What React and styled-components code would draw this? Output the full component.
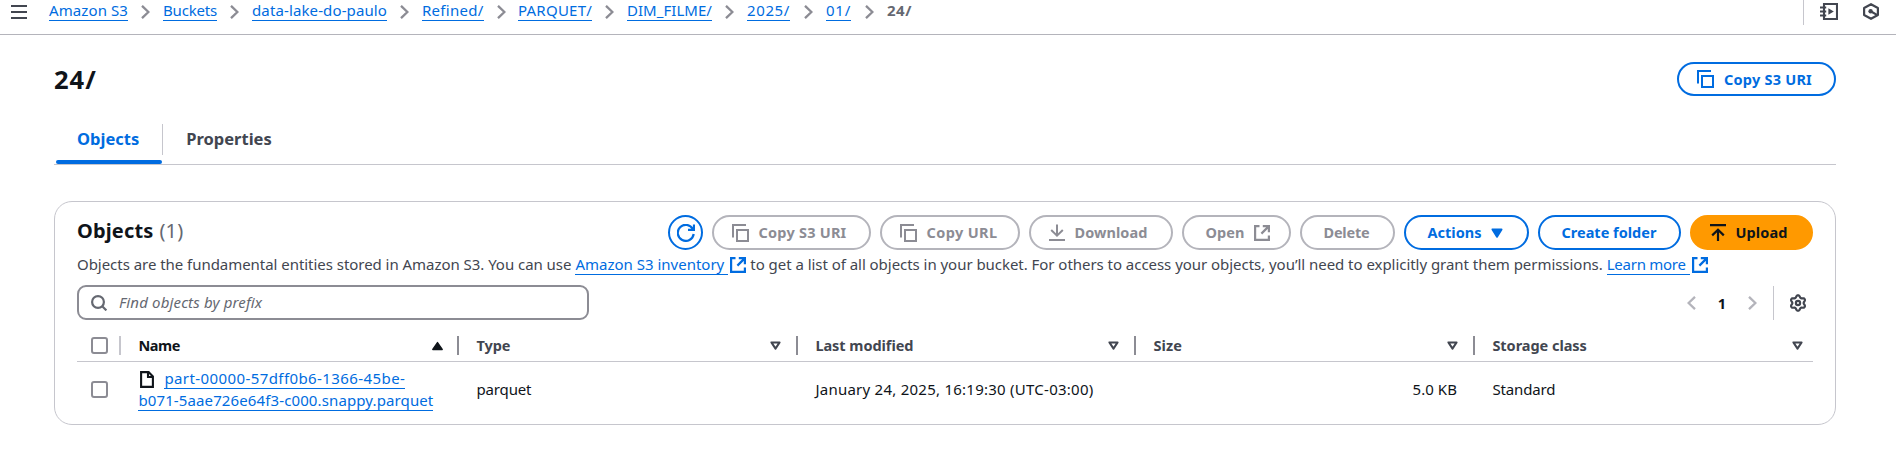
import React from "react";
import styled, { createGlobalStyle, css } from "styled-components";

const color = {
  blue: "#006ce0",
  ink: "#0f141a",
  body: "#424650",
  muted: "#656871",
  grey: "#8c8c94",
  disabled: "#b4b4bb",
  line: "#c6c6cd",
  orange: "#ff9900",
};

const GlobalStyle = createGlobalStyle`
  * { box-sizing: border-box; }
  body {
    margin: 0;
    background: #fff;
    color: ${color.ink};
    font-family: "Noto Sans", "Open Sans", sans-serif;
    font-size: 15px;
    line-height: 22px;
    overflow: hidden;
  }
`;

/* ---------- icons ---------- */

const Svg = styled.svg`
  display: block;
  flex: none;
  width: ${(p) => p.$w || 17}px;
  height: ${(p) => p.$h || p.$w || 17}px;
  fill: none;
  stroke: currentColor;
  stroke-width: ${(p) => p.$stroke || 2};
`;

const MenuIcon = () => (
  <Svg viewBox="0 0 16 15" $w={16} $h={15} $stroke={2}>
    <path d="M0 2h16M0 8h16M0 14h16" />
  </Svg>
);
const ChevronIcon = ({ left }) => (
  <Svg viewBox="0 0 9 14" $w={9} $h={14} $stroke={2.3}>
    <path d={left ? "M8 .8 1.6 7 8 13.2" : "M1 .8 7.4 7 1 13.2"} />
  </Svg>
);
const CopyIcon = () => (
  <Svg viewBox="0 0 17 18" $w={17} $h={18} $stroke={2}>
    <path d="M14 1H1v12.5" />
    <path d="M5 6h11v11H5z" />
  </Svg>
);
const RefreshIcon = () => (
  <Svg viewBox="0 0 18 18" $w={18} $stroke={2.2}>
    <path d="M16.7 10A8 8 0 1 1 15.9 5.2" />
    <path d="M17 .4v5.4h-6" />
  </Svg>
);
const DownloadIcon = () => (
  <Svg viewBox="0 0 16 17" $w={16} $h={17}>
    <path d="M0 16h16M8 .5v11M2.2 6 8 11.6 13.8 6" />
  </Svg>
);
const UploadIcon = () => (
  <Svg viewBox="0 0 16 17" $w={16} $h={17} $stroke={2.2}>
    <path d="M0 1.2h16M8 17V6M2.2 11.4 8 5.8l5.8 5.6" />
  </Svg>
);
const ExternalIcon = () => (
  <Svg viewBox="0 0 16 16" $w={16} $stroke={2.2}>
    <path d="M5.5 1.1H1.1v13.8h13.8v-4.4M8.8 1.1h6.1v6.1M14.9 1.1 7.4 8.6" />
  </Svg>
);
const SearchIcon = () => (
  <Svg viewBox="0 0 16 16" $w={16} $stroke={2.2}>
    <circle cx="7" cy="7" r="5.9" />
    <path d="m11.2 11.2 4.2 4.2" />
  </Svg>
);
const FileIcon = () => (
  <Svg viewBox="0 0 14 17" $w={14} $h={17} $stroke={2.1}>
    <path d="M1.1 1.1h7.5L12.9 5.4v10.5H1.1z" />
    <path d="M8 1v5h5" />
  </Svg>
);
const gearPath =
  Array.from({ length: 72 }, (_, i) => {
    const a = (i / 72) * Math.PI * 2;
    const wave = Math.cos(6 * a);
    const r = 6.7 + 1.05 * Math.sign(wave) * Math.pow(Math.abs(wave), 0.8);
    return `${i ? "L" : "M"}${(9 + r * Math.sin(a)).toFixed(2)} ${(9 - r * Math.cos(a)).toFixed(2)}`;
  }).join("") + "Z";
const GearIcon = () => (
  <Svg viewBox="0 0 18 18" $w={18} $stroke={2.2}>
    <path d={gearPath} strokeLinejoin="round" />
    <circle cx="9" cy="9" r="2.1" />
  </Svg>
);
const NotebookIcon = () => (
  <Svg viewBox="0 0 18 17" $w={18} $h={17} $stroke={2.1}>
    <path d="M4 1h13v15H4z" />
    <path d="M0 4.4h6.2M0 8.5h6.2M0 12.6h6.2" strokeWidth="2" />
    <path d="M8.4 5.2v6.6l5.4-3.3z" fill="currentColor" stroke="none" />
  </Svg>
);
const HexagonIcon = () => (
  <Svg viewBox="0 0 16 17" $w={16} $h={17} $stroke={2.2}>
    <path d="M8 1.2 14.9 5v7L8 15.8 1.1 12V5z" strokeLinejoin="round" />
    <circle cx="7.6" cy="8.2" r="2.2" fill="currentColor" stroke="none" />
    <path d="m7.6 8.2 6.4 3.7" />
  </Svg>
);
const CaretIcon = () => (
  <Svg viewBox="0 0 12 10" $w={12} $h={10}>
    <path d="M1.5 1.4h9L6 8.6z" fill="currentColor" strokeLinejoin="round" />
  </Svg>
);
const SortIcon = ({ active }) => (
  <Svg viewBox="0 0 11 10" $w={11} $h={10}>
    {active ? (
      <path d="M.8 8.5h9.4L5.5 1.6z" fill="currentColor" strokeLinejoin="round" strokeWidth="1.4" />
    ) : (
      <path d="M1.4 1.4h8.2L5.5 7.6z" strokeLinejoin="round" />
    )}
  </Svg>
);

/* ---------- top bar ---------- */

const Label = styled.span`
  letter-spacing: ${(p) => p.$track || 0}px;
  white-space: nowrap;
`;

const TopBar = styled.header`
  display: flex;
  align-items: flex-start;
  height: 35px;
  padding: 0 17px 0 11px;
  border-bottom: 1px solid ${color.disabled};
  color: ${color.body};
`;
const MenuButton = styled.div`
  padding-top: 4px;
  margin-right: 22px;
`;
const Crumbs = styled.nav`
  display: flex;
  flex: 1;
`;
const Crumb = styled.div`
  display: flex;
  width: ${(p) => p.$w}px;
  color: ${(p) => (p.$current ? color.muted : color.blue)};
  font-weight: ${(p) => (p.$current ? 700 : 400)};
  line-height: 20px;
`;
const CrumbLink = styled.a`
  height: 21px;
  white-space: nowrap;
  border-bottom: 1px solid ${color.blue};
  letter-spacing: ${(p) => p.$track}px;
`;
const CrumbSeparator = styled.span`
  padding: 5px 0 0 13px;
  margin-left: auto;
  margin-right: 13px;
  color: ${color.grey};
`;
const TopTools = styled.div`
  display: flex;
  gap: 25px;
  height: 25px;
  padding: 3px 0 0 16px;
  border-left: 1px solid ${color.line};
`;

/* ---------- page ---------- */

const Page = styled.main`
  padding: 27px 60px 0 54px;
`;
const TitleRow = styled.div`
  display: flex;
  align-items: center;
  justify-content: space-between;
  height: 34px;
`;
const Title = styled.h1`
  margin: 0;
  font-size: 25.5px;
  font-weight: 700;
  letter-spacing: 1px;
`;
const Tabs = styled.div`
  display: flex;
  align-items: center;
  height: 50px;
  margin-top: 19px;
  border-bottom: 1px solid ${color.line};
`;
const Tab = styled.div`
  position: relative;
  display: flex;
  align-items: center;
  height: 49px;
  padding: 0 23px 2px;
  font-size: 16.5px;
  font-weight: 700;
  color: ${(p) => (p.$active ? color.blue : color.body)};
  ${(p) =>
    p.$active &&
    css`
      &::after {
        content: "";
        position: absolute;
        left: 2px;
        right: 0;
        bottom: 0;
        height: 4px;
        border-radius: 2px;
        background: ${color.blue};
      }
    `}
`;
const TabDivider = styled.div`
  width: 1px;
  height: 31px;
  background: ${color.line};
`;

const Button = styled.button`
  display: flex;
  align-items: center;
  gap: 10px;
  width: ${(p) => p.$w}px;
  height: ${(p) => p.$h || 35}px;
  padding: 0 0 0 ${(p) => (p.$leadIcon ? 18 : 22)}px;
  border: 2px solid ${color.blue};
  border-radius: 18px;
  background: #fff;
  color: ${color.blue};
  font: 700 14.5px/20px "Noto Sans", "Open Sans", sans-serif;
  ${(p) =>
    p.$off &&
    css`
      border-color: ${color.disabled};
      color: ${color.grey};
    `}
  ${(p) =>
    p.$primary &&
    css`
      border-color: ${color.orange};
      background: ${color.orange};
      color: ${color.ink};
    `}
`;
const RoundButton = styled(Button)`
  justify-content: center;
  padding: 0;
`;

/* ---------- objects panel ---------- */

const Panel = styled.section`
  height: 224px;
  margin-top: 36px;
  padding: 13px 22px 0;
  border: 1px solid ${color.line};
  border-radius: 18px;
`;
const PanelHeader = styled.div`
  display: flex;
  align-items: center;
  justify-content: space-between;
  height: 35px;
  ${Button} > ${Label} {
    padding-bottom: 2px;
    margin-left: -0.5px;
  }
`;
const PanelTitle = styled.h2`
  display: flex;
  gap: 6px;
  margin: 0;
  padding-bottom: 3px;
  font-size: 20px;
  font-weight: 700;
  letter-spacing: 0.15px;
`;
const Counter = styled.span`
  color: ${color.muted};
  font-weight: 400;
`;
const ButtonGroup = styled.div`
  display: flex;
  gap: 9px;
`;
const Description = styled.p`
  display: flex;
  margin: 3px 0 0;
  height: 22px;
  color: ${color.body};
  white-space: nowrap;
`;
const InfoLink = styled.a`
  display: flex;
  align-items: flex-start;
  margin: 0 4px 0 4px;
  color: ${color.blue};
  svg {
    margin: 4px 0 0 2px;
  }
`;
const InfoLinkText = styled.span`
  height: 22px;
  padding-right: 4px;
  border-bottom: 1px solid ${color.blue};
  letter-spacing: ${(p) => p.$track || 0}px;
`;
const FilterRow = styled.div`
  display: flex;
  justify-content: space-between;
  align-items: center;
  height: 35px;
  margin-top: 10px;
`;
const SearchBox = styled.div`
  display: flex;
  align-items: center;
  gap: 12px;
  width: 512px;
  height: 35px;
  padding-left: 12px;
  border: 2px solid ${color.grey};
  border-radius: 9px;
  color: ${color.muted};
`;
const Placeholder = styled.span`
  padding-bottom: 2px;
  font-size: 15px;
  font-style: italic;
  letter-spacing: 0.15px;
`;
const Pagination = styled.div`
  display: flex;
  align-items: center;
  color: ${color.disabled};
`;
const PageNumber = styled.span`
  width: 52px;
  text-align: center;
  font-size: 14.5px;
  font-weight: 700;
  color: ${color.ink};
`;
const Preferences = styled.div`
  display: flex;
  align-items: center;
  height: 34px;
  margin-left: 16px;
  padding: 0 6px 0 15px;
  border-left: 1px solid ${color.line};
  color: ${color.body};
`;

const Table = styled.div`
  margin-top: 10px;
`;
const Row = styled.div`
  display: grid;
  grid-template-columns: 44px 338px 339px 338px 339px 338px;
  align-items: center;
  height: 54px;
`;
const HeadRow = styled(Row)`
  height: 32px;
  border-bottom: 1px solid ${color.line};
`;
const HeadCell = styled.div`
  display: flex;
  align-items: center;
  justify-content: space-between;
  height: 19px;
  padding: 0 ${(p) => (p.$last ? 10 : p.$sorted ? 14 : 15)}px 0 17.4px;
  border-right: ${(p) => (p.$last ? "none" : `2px solid ${color.grey}`)};
  color: ${(p) => (p.$sorted ? color.ink : color.body)};
  font-size: 14.5px;
  font-weight: 700;
  ${Label} {
    padding-bottom: 1px;
  }
`;
const CheckCell = styled.div`
  display: flex;
  align-items: center;
  height: 19px;
  padding-left: 14px;
  border-right: ${(p) => (p.$head ? `2px solid ${color.line}` : "none")};
`;
const Checkbox = styled.span`
  width: 17px;
  height: 17px;
  border: 2px solid ${color.grey};
  border-radius: 3px;
`;
const Cell = styled.div`
  padding: 0 18px 0 17.4px;
  text-align: ${(p) => p.$align || "left"};
  white-space: nowrap;
`;
const NameLine = styled.div`
  display: flex;
  align-items: flex-start;
  height: 22px;
  svg {
    margin: 4px 10px 0 2px;
  }
`;
const FileLink = styled.a`
  height: 22px;
  border-bottom: 1px solid ${color.blue};
  color: ${color.blue};
  letter-spacing: ${(p) => p.$track}px;
`;

const crumbs = [
  { text: "Amazon S3", w: 114, track: 0.1 },
  { text: "Buckets", w: 89, track: -0.18 },
  { text: "data-lake-do-paulo", w: 170, track: 0.12 },
  { text: "Refined/", w: 96, track: 0.27 },
  { text: "PARQUET/", w: 109, track: 0.23 },
  { text: "DIM_FILME/", w: 120, track: 0.04 },
  { text: "2025/", w: 79, track: 0.62 },
  { text: "01/", w: 61, track: 0.75 },
];

const columns = [
  { text: "Name", track: -0.45, sorted: true },
  { text: "Type", track: -0.05 },
  { text: "Last modified", track: -0.04 },
  { text: "Size", track: 0.1 },
  { text: "Storage class", track: -0.03, last: true },
];

export default function App() {
  return (
    <>
      <GlobalStyle />
      <TopBar>
        <MenuButton>
          <MenuIcon />
        </MenuButton>
        <Crumbs>
          {crumbs.map((c) => (
            <Crumb key={c.text} $w={c.w}>
              <CrumbLink $track={c.track}>{c.text}</CrumbLink>
              <CrumbSeparator>
                <ChevronIcon />
              </CrumbSeparator>
            </Crumb>
          ))}
          <Crumb $current>
            <Label $track={0.54}>24/</Label>
          </Crumb>
        </Crumbs>
        <TopTools>
          <NotebookIcon />
          <HexagonIcon />
        </TopTools>
      </TopBar>

      <Page>
        <TitleRow>
          <Title>24/</Title>
          <Button $w={159} $h={34} $leadIcon>
            <CopyIcon />
            <Label $track={0.23}>Copy S3 URI</Label>
          </Button>
        </TitleRow>

        <Tabs>
          <Tab $active>Objects</Tab>
          <TabDivider />
          <Tab>Properties</Tab>
        </Tabs>

        <Panel>
          <PanelHeader>
            <PanelTitle>
              <span>Objects</span>
              <Counter>(1)</Counter>
            </PanelTitle>
            <ButtonGroup>
              <RoundButton $w={35}>
                <RefreshIcon />
              </RoundButton>
              <Button $w={159} $off $leadIcon>
                <CopyIcon />
                <Label $track={0.23}>Copy S3 URI</Label>
              </Button>
              <Button $w={140} $off $leadIcon>
                <CopyIcon />
                <Label $track={0.39}>Copy URL</Label>
              </Button>
              <Button $w={144} $off $leadIcon>
                <DownloadIcon />
                <Label $track={0.06}>Download</Label>
              </Button>
              <Button $w={109} $off>
                <Label $track={0.05}>Open</Label>
                <ExternalIcon />
              </Button>
              <Button $w={95} $off>
                <Label $track={-0.2}>Delete</Label>
              </Button>
              <Button $w={125}>
                <Label>Actions</Label>
                <CaretIcon />
              </Button>
              <Button $w={143}>
                <Label>Create folder</Label>
              </Button>
              <Button $w={123} $primary $leadIcon>
                <UploadIcon />
                <Label $track={0.1}>Upload</Label>
              </Button>
            </ButtonGroup>
          </PanelHeader>

          <Description>
            <Label $track={-0.04}>
              Objects are the fundamental entities stored in Amazon S3. You can use
            </Label>
            <InfoLink>
              <InfoLinkText>Amazon S3 inventory</InfoLinkText>
              <ExternalIcon />
            </InfoLink>
            <Label $track={-0.04}>
              to get a list of all objects in your bucket. For others to access your objects, you’ll
              need to explicitly grant them permissions.
            </Label>
            <InfoLink>
              <InfoLinkText $track={-0.26}>Learn more</InfoLinkText>
              <ExternalIcon />
            </InfoLink>
          </Description>

          <FilterRow>
            <SearchBox>
              <SearchIcon />
              <Placeholder>Find objects by prefix</Placeholder>
            </SearchBox>
            <Pagination>
              <ChevronIcon left />
              <PageNumber>1</PageNumber>
              <ChevronIcon />
              <Preferences>
                <GearIcon />
              </Preferences>
            </Pagination>
          </FilterRow>

          <Table>
            <HeadRow>
              <CheckCell $head>
                <Checkbox />
              </CheckCell>
              {columns.map((c) => (
                <HeadCell key={c.text} $sorted={c.sorted} $last={c.last}>
                  <Label $track={c.track}>{c.text}</Label>
                  <SortIcon active={c.sorted} />
                </HeadCell>
              ))}
            </HeadRow>
            <Row>
              <CheckCell>
                <Checkbox />
              </CheckCell>
              <Cell>
                <NameLine>
                  <FileIcon />
                  <FileLink $track={0.41}>part-00000-57dff0b6-1366-45be-</FileLink>
                </NameLine>
                <NameLine>
                  <FileLink $track={0.12}>b071-5aae726e64f3-c000.snappy.parquet</FileLink>
                </NameLine>
              </Cell>
              <Cell>
                <Label $track={-0.13}>parquet</Label>
              </Cell>
              <Cell>
                <Label $track={0.25}>January 24, 2025, 16:19:30 (UTC-03:00)</Label>
              </Cell>
              <Cell $align="right">
                <Label $track={0.06}>5.0 KB</Label>
              </Cell>
              <Cell>
                <Label $track={-0.14}>Standard</Label>
              </Cell>
            </Row>
          </Table>
        </Panel>
      </Page>
    </>
  );
}
